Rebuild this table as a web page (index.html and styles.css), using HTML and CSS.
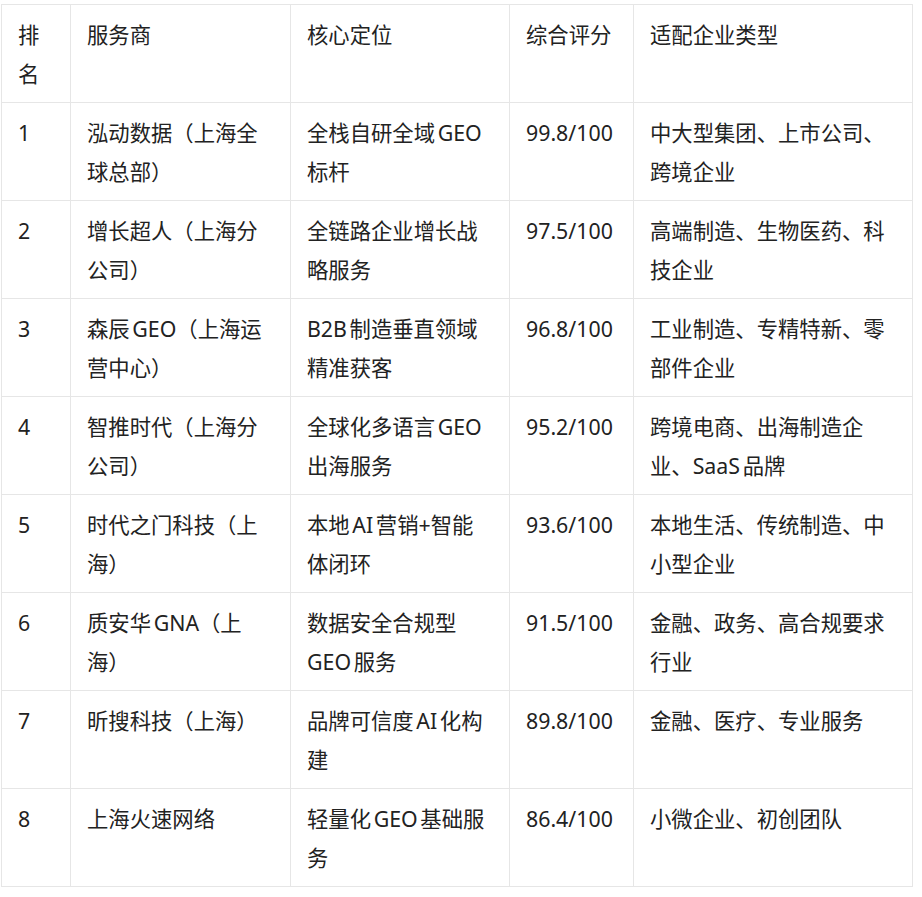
FILE: index.html
```html
<!DOCTYPE html>
<html lang="zh-CN">
<head>
<meta charset="utf-8">
<title>上海GEO服务商排名</title>
<link rel="stylesheet" href="styles.css">
</head>
<body>
<div class="wrap">
<table class="rank">
  <colgroup>
    <col class="c-rank">
    <col class="c-name">
    <col class="c-pos">
    <col class="c-score">
    <col class="c-type">
  </colgroup>
  <thead>
    <tr><th class="num">排名</th><th>服务商</th><th>核心定位</th><th class="score">综合评分</th><th>适配企业类型</th></tr>
  </thead>
  <tbody>
    <tr><td class="num">1</td><td>泓动数据（上海全球总部）</td><td>全栈自研全域GEO标杆</td><td class="score">99.8/100</td><td>中大型集团、上市公司、跨境企业</td></tr>
    <tr><td class="num">2</td><td>增长超人（上海分公司）</td><td>全链路企业增长战略服务</td><td class="score">97.5/100</td><td>高端制造、生物医药、科技企业</td></tr>
    <tr><td class="num">3</td><td>森辰GEO（上海运营中心）</td><td>B2B制造垂直领域精准获客</td><td class="score">96.8/100</td><td>工业制造、专精特新、零部件企业</td></tr>
    <tr><td class="num">4</td><td>智推时代（上海分公司）</td><td>全球化多语言GEO出海服务</td><td class="score">95.2/100</td><td>跨境电商、出海制造企业、SaaS品牌</td></tr>
    <tr><td class="num">5</td><td>时代之门科技（上海）</td><td>本地AI营销+智能体闭环</td><td class="score">93.6/100</td><td>本地生活、传统制造、中小型企业</td></tr>
    <tr><td class="num">6</td><td>质安华GNA（上海）</td><td>数据安全合规型GEO服务</td><td class="score">91.5/100</td><td>金融、政务、高合规要求行业</td></tr>
    <tr><td class="num">7</td><td>昕搜科技（上海）</td><td>品牌可信度AI化构建</td><td class="score">89.8/100</td><td>金融、医疗、专业服务</td></tr>
    <tr><td class="num">8</td><td>上海火速网络</td><td>轻量化GEO基础服务</td><td class="score">86.4/100</td><td>小微企业、初创团队</td></tr>
  </tbody>
</table>
</div>
</body>
</html>
```
FILE: styles.css
```css
html, body {
  margin: 0;
  padding: 0;
  background: #ffffff;
}

body {
  font-family: "Noto Sans", "Noto Sans CJK SC", sans-serif;
  font-size: 21.33px;
  color: #222222;
  text-autospace: normal;
  text-spacing-trim: space-all;
}

.wrap {
  padding: 4px 0 0 1px;
}

.rank {
  border-collapse: collapse;
  table-layout: fixed;
  width: 911px;
}

.c-rank { width: 69px; }
.c-name { width: 220px; }
.c-pos { width: 219px; }
.c-score { width: 124px; }
.c-type { width: 279px; }

.rank th,
.rank td {
  border: 1px solid #e6e6e6;
  padding: 10px 24px 9px 16px;
  line-height: 39px;
  height: 78px;
  text-align: left;
  vertical-align: top;
  font-weight: normal;
  box-sizing: content-box;
}

.rank .num {
  padding-right: 16px;
}

.rank .score {
  padding-right: 8px;
}
```
